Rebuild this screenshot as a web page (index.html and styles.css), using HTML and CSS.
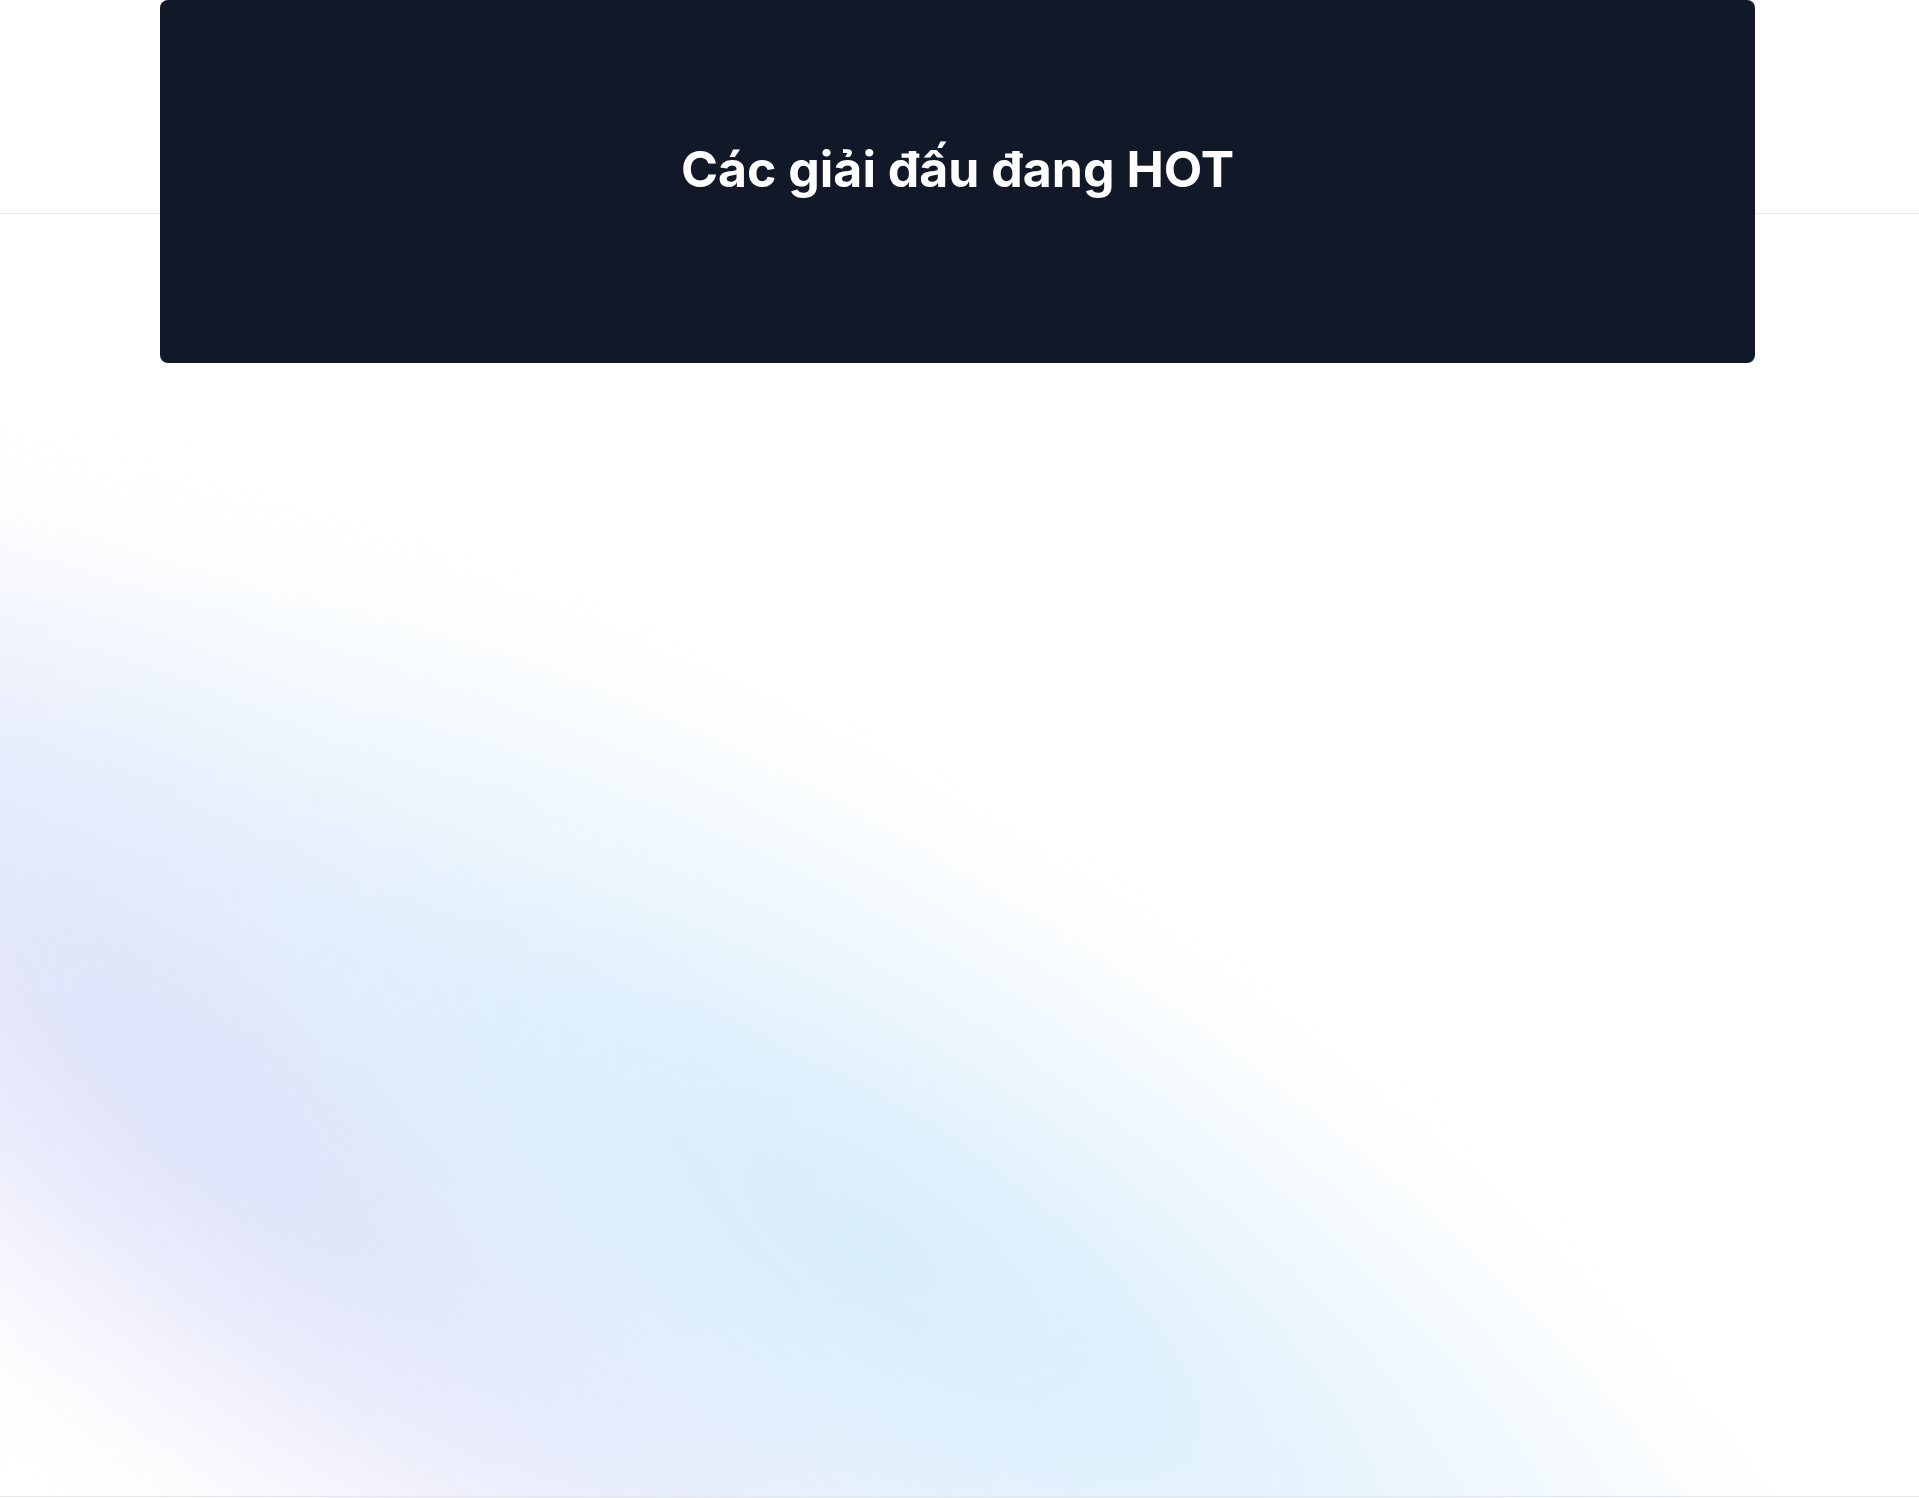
FILE: index.html
```html
<!DOCTYPE html>
<html lang="vi">
<head>
<meta charset="utf-8">
<title>Các giải đấu đang HOT</title>
<link rel="stylesheet" href="styles.css">
</head>
<body>
<div class="page">
  <div class="glow" aria-hidden="true">
    <div class="glow-lavender"></div>
    <div class="glow-blue"></div>
  </div>
  <header class="topbar"></header>
  <main class="main">
    <section class="hero-card">
      <h1 class="hero-title">Các giải đấu đang HOT</h1>
    </section>
  </main>
  <footer class="footer"></footer>
</div>
</body>
</html>
```

FILE: styles.css
```css
* { box-sizing: border-box; }
html, body { margin: 0; padding: 0; }
body {
  background: #ffffff;
  font-family: Inter, "Noto Sans", "Liberation Sans", sans-serif;
  overflow: hidden;
}
.page {
  position: relative;
  height: 1498px;
  overflow: hidden;
  display: flex;
  flex-direction: column;
}
.glow {
  position: absolute;
  inset: 0;
  pointer-events: none;
  z-index: 0;
}
.glow-lavender {
  position: absolute;
  left: -850px;
  top: 730px;
  width: 2200px;
  height: 740px;
  transform: rotate(38deg);
  background: radial-gradient(closest-side, rgba(218, 220, 250, 1), rgba(226, 228, 250, 0.65) 55%, rgba(255, 255, 255, 0) 100%);
  filter: blur(55px);
}
.glow-blue {
  position: absolute;
  left: -330px;
  top: 845px;
  width: 2400px;
  height: 800px;
  transform: rotate(33deg);
  background: radial-gradient(closest-side, rgba(212, 235, 252, 1), rgba(222, 240, 252, 0.6) 55%, rgba(255, 255, 255, 0) 100%);
  filter: blur(50px);
}
.topbar {
  position: relative;
  height: 214px;
  border-bottom: 1px solid #e5e7eb;
  flex: none;
}
.main {
  position: relative;
  z-index: 1;
  margin-top: -214px;
  flex: 1;
}
.hero-card {
  width: 1595px;
  height: 363px;
  margin-left: 160px;
  background: #111827;
  border-radius: 8px;
  display: flex;
  justify-content: center;
  align-items: flex-start;
  padding-top: 139px;
}
.hero-title {
  margin: 0;
  color: #ffffff;
  font-family: Inter, "Noto Sans", sans-serif;
  font-weight: 700;
  font-size: 50px;
  line-height: normal;
}
.footer {
  position: relative;
  z-index: 1;
  height: 2px;
  border-top: 1px solid #e5e7eb;
  flex: none;
}
```
